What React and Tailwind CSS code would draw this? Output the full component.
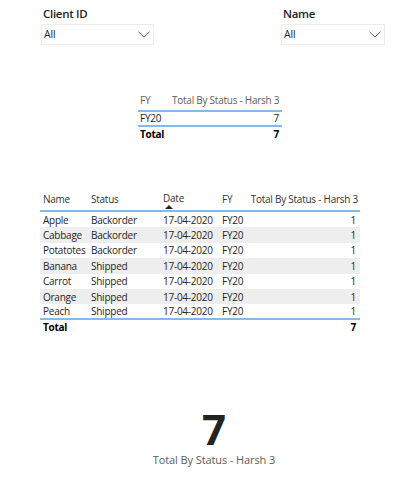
import React from 'react';

const rows = [
  { name: 'Apple', status: 'Backorder' },
  { name: 'Cabbage', status: 'Backorder' },
  { name: 'Potatotes', status: 'Backorder' },
  { name: 'Banana', status: 'Shipped' },
  { name: 'Carrot', status: 'Shipped' },
  { name: 'Orange', status: 'Shipped' },
  { name: 'Peach', status: 'Shipped' },
];

function Chevron() {
  return (
    <svg width="12" height="7" viewBox="0 0 12 7" fill="none">
      <path d="M0.5 0.8 L6 6 L11.5 0.8" stroke="#605e5c" strokeWidth="1" />
    </svg>
  );
}

function Slicer({ label, className }) {
  return (
    <div className={className}>
      <div className="h-[18px] pl-[2px] text-[11.5px] leading-[18px] font-semibold tracking-[-0.3px] text-[#252423]">
        {label}
      </div>
      <div className="mt-[1px] h-[21px] flex items-center justify-between pl-[2px] pr-[3px] border border-[#ededed] bg-white">
        <span className="text-[10.5px] tracking-[-0.2px] text-[#252423]">All</span>
        <Chevron />
      </div>
    </div>
  );
}

export default function App() {
  return (
    <div
      className="w-[413px] h-[500px] bg-white text-[#252423] overflow-hidden"
      style={{ fontFamily: '"Open Sans", "Noto Sans", sans-serif' }}
    >
      {/* Slicers */}
      <div className="flex pt-[5px]">
        <Slicer label="Client ID" className="ml-[41px] w-[113px]" />
        <Slicer label="Name" className="ml-[127px] w-[104px]" />
      </div>

      {/* Small summary table */}
      <div className="ml-[138px] mt-[46px] w-[144px] text-[10px] tracking-[-0.25px]">
        <div className="flex h-[21px] items-start pt-[2px] leading-[14px] border-b-2 border-[#86b9e9] text-[#605e5c]">
          <span className="w-[32px] pl-[2px]">FY</span>
          <span className="flex-1 pl-[2px] whitespace-nowrap">Total By Status - Harsh 3</span>
        </div>
        <div className="flex h-[15px] items-center border-b-2 border-[#86b9e9]">
          <span className="w-[32px] pl-[2px]">FY20</span>
          <span className="flex-1 text-right pr-[3px]">7</span>
        </div>
        <div className="flex h-[15px] items-center font-bold text-black">
          <span className="w-[32px] pl-[2px]">Total</span>
          <span className="flex-1 text-right pr-[3px]">7</span>
        </div>
      </div>

      {/* Detail table */}
      <div className="ml-[40px] mt-[46px] w-[320px] text-[10px] tracking-[-0.25px]">
        <div className="flex h-[24px] items-start pt-[4px] border-b-2 border-[#86b9e9] text-[#333333]">
          <span className="w-[48px] pl-[3px]">Name</span>
          <span className="w-[72px] pl-[3px]">Status</span>
          <span className="w-[59px] pl-[3px] flex flex-col items-start leading-[12px]">
            Date
            <svg width="8" height="4" viewBox="0 0 8 4" className="ml-[2px] mt-[1px]">
              <path d="M0 4 L4 0 L8 4 Z" fill="#252423" />
            </svg>
          </span>
          <span className="w-[28px] pl-[3px]">FY</span>
          <span className="flex-1 text-right pr-[2px] whitespace-nowrap">Total By Status - Harsh 3</span>
        </div>
        {rows.map((r, i) => (
          <div
            key={r.name}
            className={`flex h-[15.4px] items-center pt-[1px] ${i % 2 === 1 ? 'bg-[#eeeeee]' : 'bg-white'} ${
              i === rows.length - 1 ? 'border-b-2 border-[#86b9e9]' : ''
            }`}
          >
            <span className="w-[48px] pl-[3px]">{r.name}</span>
            <span className="w-[72px] pl-[3px]">{r.status}</span>
            <span className="w-[59px] pl-[3px]">17-04-2020</span>
            <span className="w-[28px] pl-[3px]">FY20</span>
            <span className="flex-1 text-right pr-[4px]">1</span>
          </div>
        ))}
        <div className="flex h-[16px] items-center font-bold text-black">
          <span className="w-[48px] pl-[3px]">Total</span>
          <span className="flex-1 text-right pr-[4px]">7</span>
        </div>
      </div>

      {/* Card */}
      <div className="mt-[70px] ml-[14px] w-[400px] flex flex-col items-center">
        <div className="text-[42px] leading-[46px] font-bold text-[#252423]">7</div>
        <div className="text-[11px] tracking-[-0.1px] text-[#605e5c] whitespace-nowrap">
          Total By Status - Harsh 3
        </div>
      </div>
    </div>
  );
}
